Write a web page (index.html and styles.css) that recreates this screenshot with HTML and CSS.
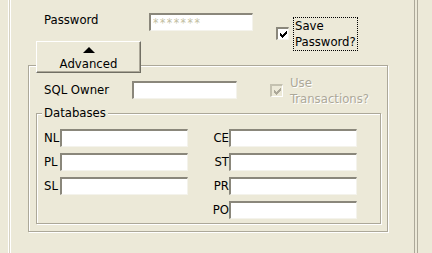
FILE: index.html
```html
<!DOCTYPE html>
<html lang="en">
  <head>
    <meta charset="UTF-8" />
    <meta name="viewport" content="width=device-width, initial-scale=1.0" />
    <title>Connection Settings</title>
    <link rel="stylesheet" href="styles.css">
  </head>

  <body>
    <div class="window">
      <div class="edge-left"></div>

      <div class="panel">
        <div class="pw-row">
          <label class="pw-label" for="password">Password</label>
          <input class="field pw-field" id="password" type="text" value="*******" readonly />
          <span class="check">
            <svg viewBox="0 0 7 7" width="7" height="7" shape-rendering="crispEdges"><path d="M6 0h1v1h-1z M5 1h2v1h-2z M0 2h1v1h-1z M4 2h3v1h-3z M0 3h2v1h-2z M3 3h3v1h-3z M0 4h5v1h-5z M1 5h3v1h-3z M2 6h1v1h-1z" fill="#000"/></svg>
          </span>
          <span class="check-text focused">Save<br>Password?</span>
        </div>

        <button class="adv-btn"><span class="tri"></span>Advanced</button>

        <div class="group">
          <div class="owner-row">
            <label class="owner-label" for="owner">SQL Owner</label>
            <input class="field owner-field" id="owner" type="text" />
            <span class="check disabled">
              <svg viewBox="0 0 7 7" width="7" height="7" shape-rendering="crispEdges"><path d="M6 0h1v1h-1z M5 1h2v1h-2z M0 2h1v1h-1z M4 2h3v1h-3z M0 3h2v1h-2z M3 3h3v1h-3z M0 4h5v1h-5z M1 5h3v1h-3z M2 6h1v1h-1z" fill="#aca899"/></svg>
            </span>
            <span class="check-text dim">Use<br>Transactions?</span>
          </div>

          <fieldset class="dbs">
            <legend>Databases</legend>
            <div class="db-grid">
              <span class="db-label">NL</span><input class="field" type="text" />
              <span class="db-label right">CE</span><input class="field" type="text" />
              <span class="db-label">PL</span><input class="field" type="text" />
              <span class="db-label right">ST</span><input class="field" type="text" />
              <span class="db-label">SL</span><input class="field" type="text" />
              <span class="db-label right">PR</span><input class="field" type="text" />
              <span></span><span></span>
              <span class="db-label right">PO</span><input class="field" type="text" />
            </div>
          </fieldset>
        </div>
      </div>

      <div class="edge-right"></div>
    </div>
  </body>
</html>
```

FILE: styles.css
```css
/* classic windows dialog look */
body {
  margin: 0;
  background-color: #ece9d8;
  font-family: "DejaVu Sans Condensed", "DejaVu Sans", sans-serif;
  font-size: 13px;
  color: #000;
  overflow: hidden;
}

.window {
  display: flex;
  height: 253px;
}

.edge-left {
  width: 8px;
  border-right: 1px solid #fff;
}

.panel {
  width: 404px;
  border-left: 1px solid #d6d2c2;
  border-right: 1px solid #aca899;
  box-shadow: inset 1px 0 0 #fff;
}

.edge-right {
  flex: 1;
  margin-left: 2px;
  border-left: 1px solid #aca899;
}

.field {
  box-sizing: border-box;
  height: 18px;
  margin: 0;
  padding: 0 2px;
  border-style: solid;
  border-width: 2px 1px 1px 2px;
  border-color: #8a877b #f4f3ec #f4f3ec #8a877b;
  background-color: #fff;
  font-family: inherit;
  font-size: 11px;
  outline: none;
}

/* top row */
.pw-row {
  display: flex;
  align-items: flex-start;
  height: 41px;
}

.pw-label {
  width: 105px;
  margin: 12px 0 0 34px;
  line-height: 16px;
}

.pw-field {
  width: 104px;
  margin-top: 13px;
  color: #c2be9f;
  font-size: 12px;
  letter-spacing: 1.5px;
}

.check {
  box-sizing: border-box;
  display: flex;
  align-items: center;
  justify-content: center;
  width: 13px;
  height: 13px;
  margin: 27px 0 0 23px;
  background-color: #fff;
  border-style: solid;
  border-width: 2px 1px 1px 2px;
  border-color: #8a877b #f4f3ec #f4f3ec #8a877b;
}

.check svg {
  margin: 1px 0 0 1px;
}

.check.disabled {
  margin: 3px 0 0 33px;
  background-color: #ece9d8;
  border-color: #c4c1b0 #fff #fff #c4c1b0;
}

.check-text {
  margin: 17px 0 0 4px;
  padding: 0 1px;
  line-height: 16px;
  border: 1px solid transparent;
}

.focused {
  border: 1px dotted #000;
}

.dim {
  margin: -7px 0 0 5px;
  color: #aca899;
  text-shadow: 1px 1px 0 #fff;
}

/* advanced toggle */
.adv-btn {
  position: relative;
  z-index: 1;
  display: flex;
  flex-direction: column;
  align-items: center;
  box-sizing: border-box;
  width: 105px;
  height: 32px;
  margin: 0 0 0 26px;
  padding: 5px 0 0;
  background-color: #ece9d8;
  border: 1px solid;
  border-color: #fff #716f64 #716f64 #fff;
  box-shadow: inset -1px -1px 0 #aca899;
  font-family: inherit;
  font-size: 13px;
  line-height: 16px;
  color: #000;
}

.tri {
  width: 0;
  height: 0;
  margin-bottom: 3px;
  border-left: 6px solid transparent;
  border-right: 6px solid transparent;
  border-bottom: 6px solid #000;
}

/* groups */
.group {
  box-sizing: border-box;
  width: 360px;
  margin: -8px 0 0 18px;
  padding-bottom: 7px;
  border: 1px solid #aca899;
  box-shadow: 1px 1px 0 #fff, inset 1px 1px 0 #fff;
}

.owner-row {
  display: flex;
  align-items: flex-start;
  height: 18px;
  padding: 15px 0 0 15px;
}

.owner-label {
  width: 88px;
  line-height: 18px;
}

.owner-field {
  width: 105px;
}

.dbs {
  box-sizing: border-box;
  width: 345px;
  margin: 6px 0 0 7px;
  padding: 8px 0 4px;
  border: 1px solid #aca899;
  box-shadow: 1px 1px 0 #fff, inset 1px 1px 0 #fff;
}

.dbs legend {
  margin-left: 5px;
  padding: 0 2px;
  line-height: 16px;
  background-color: #ece9d8;
}

.db-grid {
  display: grid;
  grid-template-columns: 16px 128px 41px 128px;
  row-gap: 6px;
  padding-left: 7px;
}

.db-label {
  line-height: 18px;
}

.db-label.right {
  text-align: right;
}
```
